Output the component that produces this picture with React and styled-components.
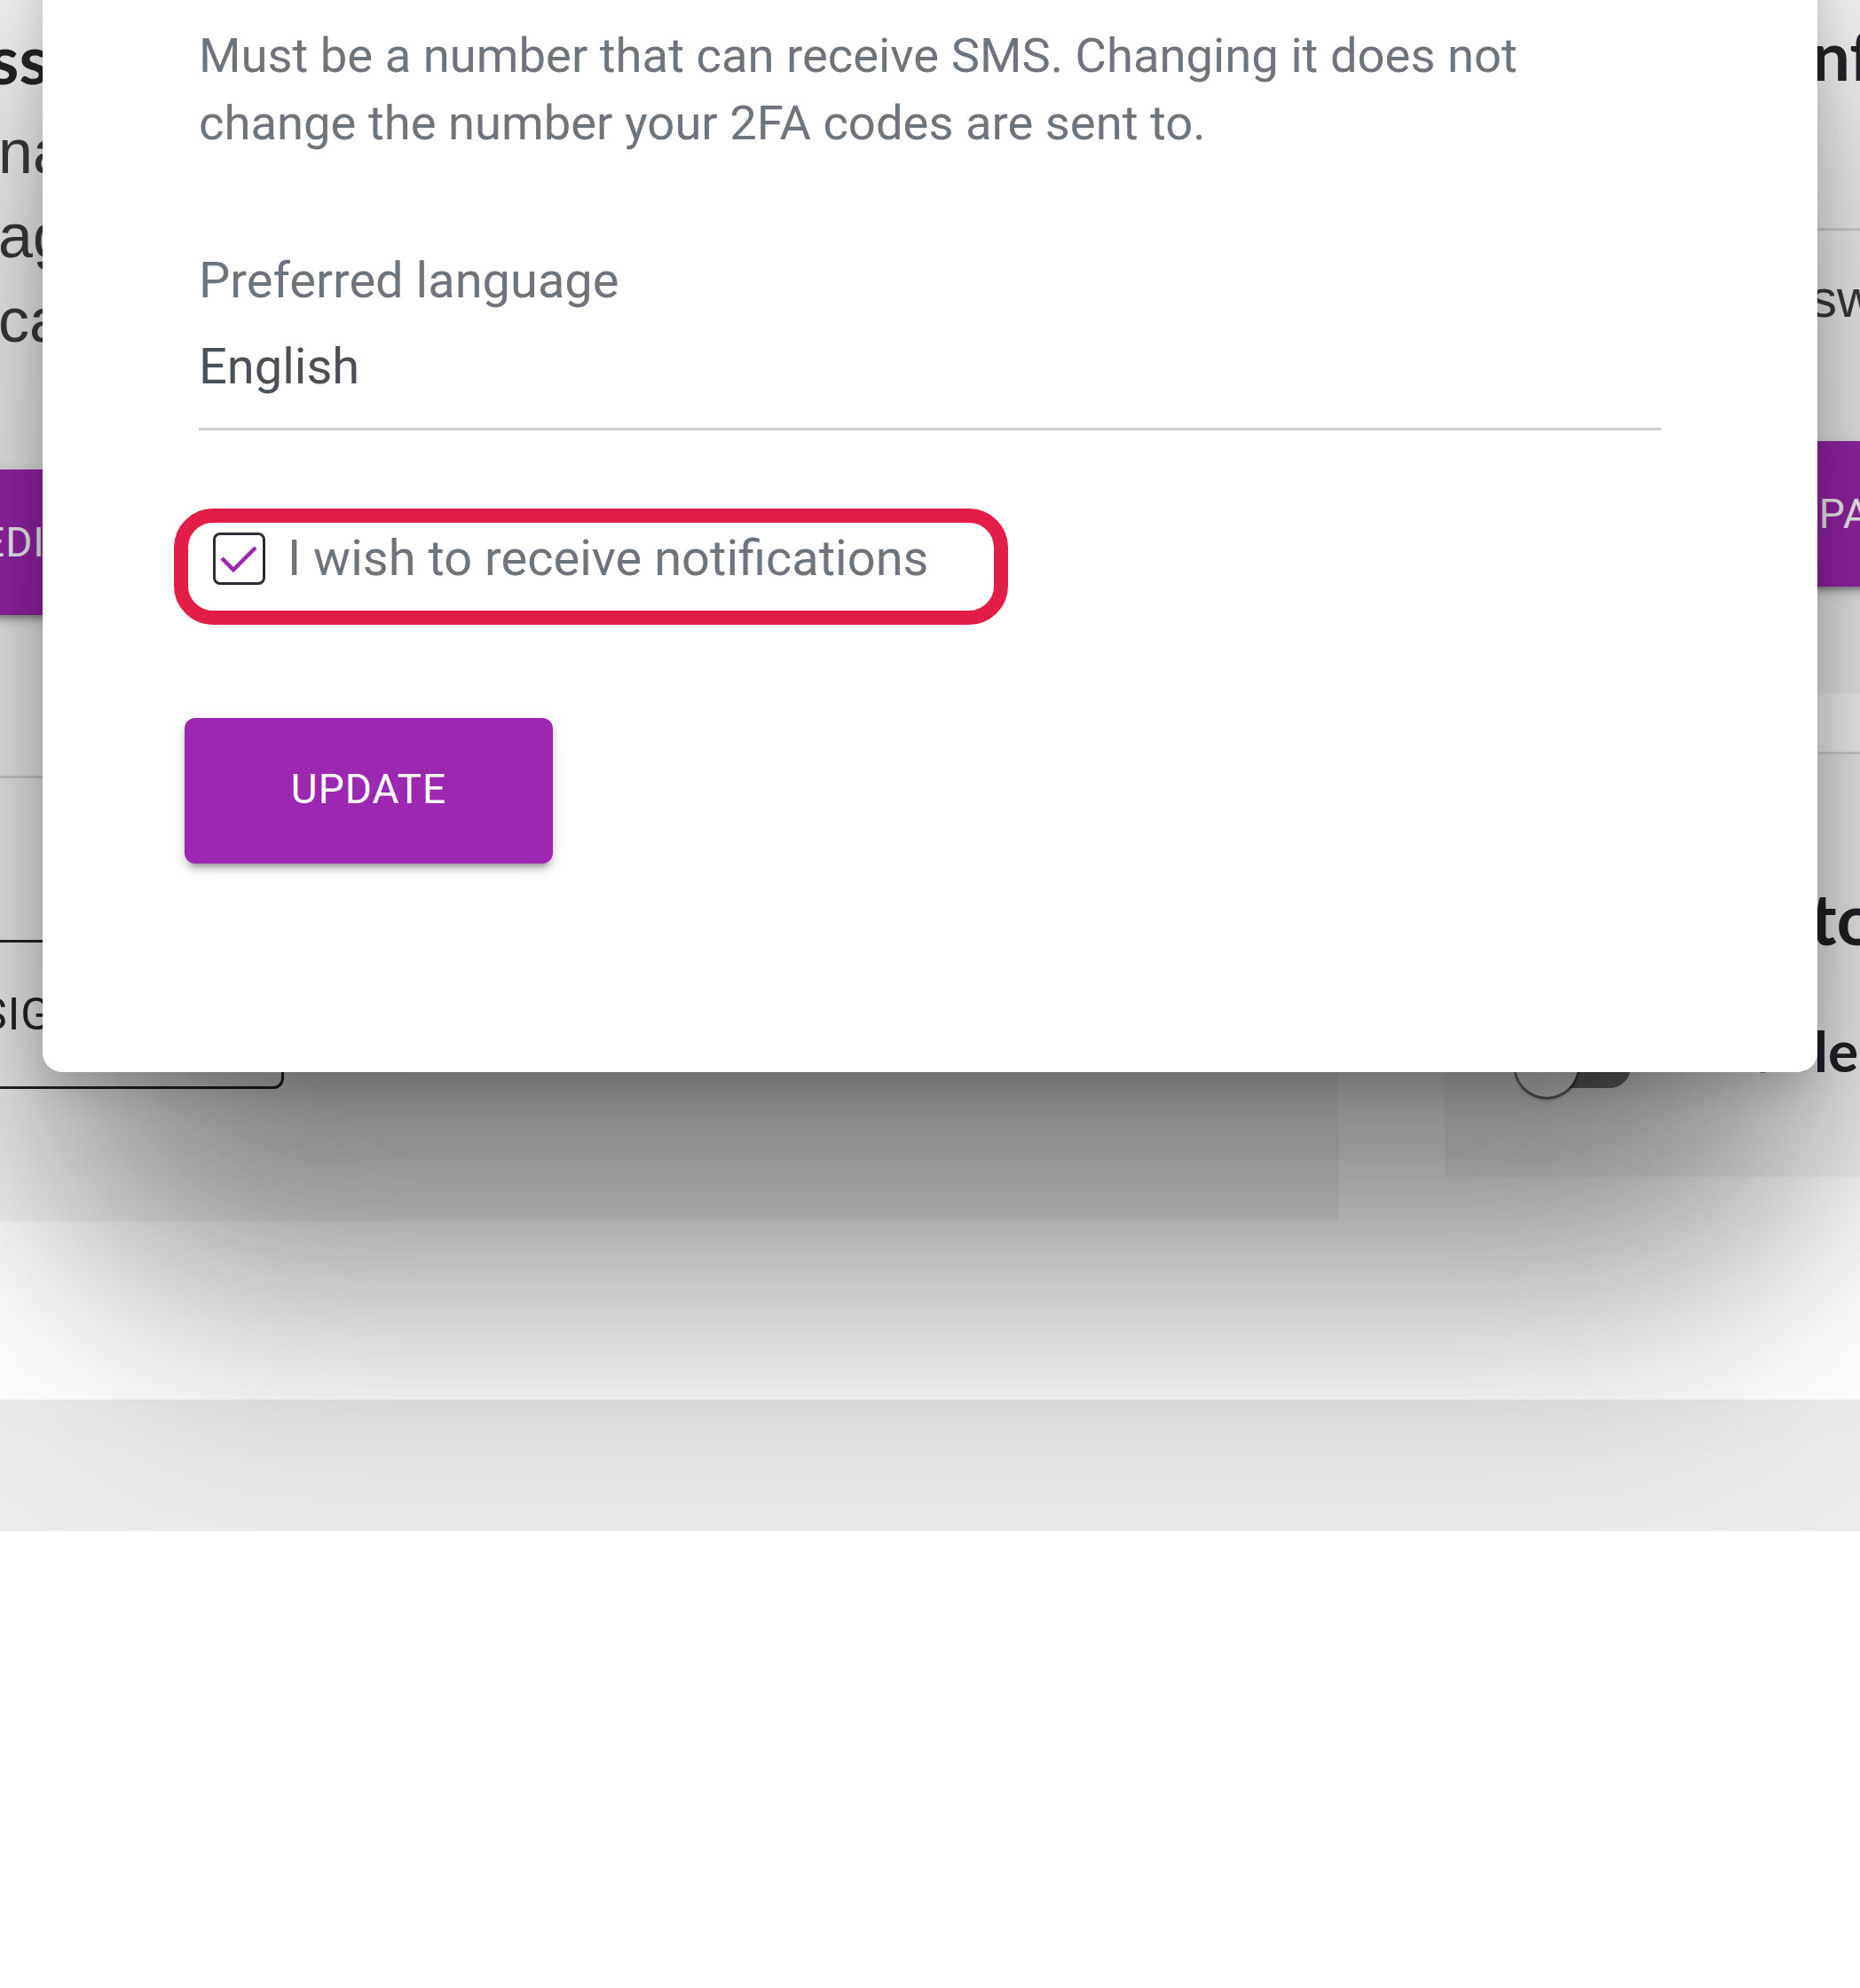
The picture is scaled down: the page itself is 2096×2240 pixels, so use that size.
import React from 'react';
import styled, { createGlobalStyle } from 'styled-components';

const GlobalStyle = createGlobalStyle`
  html, body {
    margin: 0;
    padding: 0;
    background: #fff;
  }
  body {
    font-family: Roboto, "Liberation Sans", sans-serif;
    -webkit-font-smoothing: antialiased;
  }
  *, *::before, *::after {
    box-sizing: border-box;
  }
`;

const Scene = styled.div`
  position: relative;
  height: 1725px;
  overflow: hidden;
`;

/* the settings page behind the dialog, scrolled a little */
const Page = styled.div`
  display: flex;
  flex-direction: column;
  height: 1805px;
  margin-top: -80px;
  background: #fff;
`;

const Columns = styled.main`
  flex: 1;
  display: grid;
  grid-template-columns: 2108px 900px;
  column-gap: 120px;
  align-items: start;
  margin-left: -600px;
`;

const Card = styled.div`
  display: flex;
  flex-direction: column;
  align-items: flex-start;
  background: #f5f5f5;
  padding: ${p => p.$pad};
  border-top: ${p => (p.$ruled ? '3px solid #dcdcdc' : 'none')};
`;

const RightColumn = styled.div`
  display: flex;
  flex-direction: column;
  gap: 66px;
`;

const Heading = styled.h2`
  margin: 0;
  font-family: Lato, "Liberation Sans", sans-serif;
  font-weight: 700;
  font-size: ${p => p.$size || 76}px;
  line-height: ${p => p.$lh || 91}px;
  color: #212529;
  white-space: nowrap;
`;

const ToggleLabel = styled(Heading)`
  margin-bottom: 34px;
`;

const SectionHead = styled.div`
  align-self: stretch;
  padding-bottom: 150px;
  border-bottom: 3px solid #d6d6d6;
`;

const InfoList = styled.div`
  margin-top: 13px;
  display: flex;
  flex-direction: column;
`;

const InfoLine = styled.div`
  margin-top: ${p => p.$mt || 0}px;
  font-family: "Liberation Sans", Arial, sans-serif;
  font-size: ${p => p.$size || 70}px;
  line-height: ${p => p.$lh || 95}px;
  color: #3b3b3b;
  white-space: nowrap;
`;

/* start of a line that lies off screen or under the dialog */
const Lead = styled.span`
  display: inline-flex;
  justify-content: flex-end;
  width: ${p => p.$w}px;
  overflow: hidden;
  white-space: pre;
  vertical-align: top;
`;

const FilledButton = styled.button`
  margin-top: ${p => p.$mt}px;
  height: 164px;
  padding: 0 56px 0 ${p => p.$pl}px;
  border: none;
  border-radius: 12px;
  background: #9c27b0;
  color: #fff;
  font-family: Roboto, sans-serif;
  font-size: 46px;
  letter-spacing: 1px;
  white-space: nowrap;
  box-shadow: 0 10px 4px -7px rgba(0, 0, 0, 0.2), 0 7px 7px rgba(0, 0, 0, 0.14),
    0 4px 18px rgba(0, 0, 0, 0.12);
`;

const Divider = styled.hr`
  align-self: stretch;
  margin: 181px 0 0;
  border: none;
  border-top: 3px solid #d6d6d6;
`;

const OutlineButton = styled.button`
  margin-top: 182px;
  width: 420px;
  height: 168px;
  padding: 0 34px 0 0;
  border: 3px solid #26262c;
  border-radius: 12px;
  background: transparent;
  color: #26262c;
  font-family: Roboto, sans-serif;
  font-size: 50px;
  letter-spacing: 1px;
`;

const ToggleRow = styled.div`
  margin-top: 67px;
  display: flex;
  align-items: center;
  gap: 60px;
`;

const Switch = styled.span`
  position: relative;
  display: block;
  width: 136px;
  height: 70px;
`;

const Track = styled.span`
  position: absolute;
  left: 18px;
  top: 11px;
  width: 113px;
  height: 49px;
  border-radius: 25px;
  background: #6f747c;
`;

const Thumb = styled.span`
  position: absolute;
  left: 1px;
  top: 0;
  width: 70px;
  height: 70px;
  border-radius: 50%;
  background: #fafafa;
  box-shadow: 0 3px 4px rgba(0, 0, 0, 0.35), 0 0 0 3px rgba(60, 64, 70, 0.55);
`;

const Footer = styled.footer`
  height: 148px;
  background: #ebebeb;
`;

/* dialog */
const Dialog = styled.section`
  position: absolute;
  z-index: 2;
  left: 48px;
  width: 2000px;
  top: -100px;
  bottom: 517px;
  display: flex;
  flex-direction: column;
  align-items: flex-start;
  padding: 125px 176px 0;
  background: #fff;
  border-radius: 22px;
  box-shadow: 0 20px 40px rgba(0, 0, 0, 0.14), 0 150px 500px rgba(0, 0, 0, 0.4),
    0 420px 400px -100px rgba(0, 0, 0, 0.19);
  font-family: Roboto, "Liberation Sans", sans-serif;
`;

const HelperText = styled.p`
  margin: 0;
  width: 100%;
  font-size: 54.4px;
  line-height: 76px;
  color: #6c757d;
`;

const FieldLabel = styled.label`
  margin-top: 106px;
  font-size: 56px;
  line-height: 67px;
  color: #6c757d;
`;

const SelectValue = styled.div`
  margin-top: 30px;
  align-self: stretch;
  padding-bottom: 35px;
  border-bottom: 3px solid #cfcfcf;
  font-size: 56px;
  line-height: 67px;
  color: #495057;
`;

const Highlight = styled.label`
  margin: 88px 0 0 -28px;
  width: 940px;
  height: 131px;
  display: flex;
  align-items: flex-start;
  gap: 25px;
  padding: 11px 0 0 28px;
  border: 16px solid #e21d48;
  border-radius: 44px;
`;

const CheckBox = styled.span`
  flex: none;
  width: 59px;
  height: 59px;
  border: 3px solid #2e2b35;
  border-radius: 8px;
  display: flex;
`;

const CheckLabel = styled.span`
  font-size: 56px;
  line-height: 59px;
  color: #6c757d;
  white-space: nowrap;
`;

const UpdateButton = styled.button`
  margin: 105px 0 0 -16px;
  width: 415px;
  height: 164px;
  padding: 0 0 4px;
  border: none;
  border-radius: 12px;
  background: #9c27b0;
  color: #fff;
  font-family: Roboto, sans-serif;
  font-size: 46px;
  letter-spacing: 1px;
  box-shadow: 0 10px 4px -7px rgba(0, 0, 0, 0.2), 0 7px 7px rgba(0, 0, 0, 0.14),
    0 4px 18px rgba(0, 0, 0, 0.12);
`;

function CheckIcon() {
  return (
    <svg width="53" height="53" viewBox="0 0 53 53">
      <polyline points="7,26 20,39 45,14" fill="none" stroke="#9c27b0" strokeWidth="4.5" />
    </svg>
  );
}

export default function App() {
  return (
    <Scene>
      <GlobalStyle />
      <Page>
        <Columns>
          <Card $pad="100px 0 149px 500px">
            <Heading><Lead $w={88}>Addre</Lead>ss details</Heading>
            <InfoList>
              <InfoLine><Lead $w={98}>Display </Lead>name</InfoLine>
              <InfoLine><Lead $w={98}>Preferred langu</Lead>age</InfoLine>
              <InfoLine><Lead $w={98}>Lo</Lead>cation</InfoLine>
            </InfoList>
            <FilledButton $mt={120} $pl={79}>EDIT</FilledButton>
            <Divider />
            <OutlineButton>SIGN OUT</OutlineButton>
          </Card>
          <RightColumn>
            <Card $pad="96px 79px 120px">
              <SectionHead>
                <Heading><Lead $w={335}>Contact I</Lead>nformation</Heading>
              </SectionHead>
              <InfoLine $mt={41} $size={60} $lh={72}><Lead $w={333}>Pas</Lead>sword</InfoLine>
              <FilledButton $mt={124} $pl={141}>CHANGE PASSWORD</FilledButton>
            </Card>
            <Card $ruled $pad="136px 79px 73px">
              <Heading $size={80} $lh={96}><Lead $w={333}>Au</Lead>to sign-out</Heading>
              <ToggleRow>
                <Switch>
                  <Track />
                  <Thumb />
                </Switch>
                <ToggleLabel $size={64} $lh={70}>Enable</ToggleLabel>
              </ToggleRow>
            </Card>
          </RightColumn>
        </Columns>
        <Footer />
      </Page>

      <Dialog>
        <HelperText>
          Must be a number that can receive SMS. Changing it does not change the number your 2FA codes are sent to.
        </HelperText>
        <FieldLabel>Preferred language</FieldLabel>
        <SelectValue>English</SelectValue>
        <Highlight>
          <CheckBox><CheckIcon /></CheckBox>
          <CheckLabel>I wish to receive notifications</CheckLabel>
        </Highlight>
        <UpdateButton>UPDATE</UpdateButton>
      </Dialog>
    </Scene>
  );
}
